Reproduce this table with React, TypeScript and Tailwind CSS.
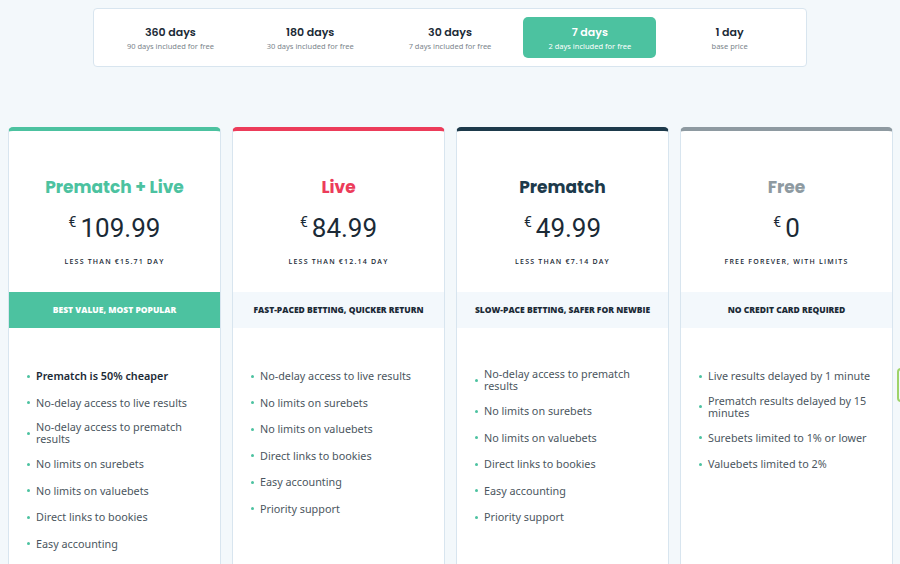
const tabs = [
  { days: "360 days", note: "90 days included for free" },
  { days: "180 days", note: "30 days included for free" },
  { days: "30 days", note: "7 days included for free" },
  { days: "7 days", note: "2 days included for free", active: true },
  { days: "1 day", note: "base price" },
];

type Plan = {
  name: string;
  color: string;
  bar: string;
  price: string;
  sub: string;
  band: string;
  featured?: boolean;
  items: string[];
  boldFirst?: boolean;
};

const plans: Plan[] = [
  {
    name: "Prematch + Live",
    color: "text-[#4cc2a0]",
    bar: "border-t-[#4cc2a0]",
    price: "109.99",
    sub: "LESS THAN €15.71 DAY",
    band: "BEST VALUE, MOST POPULAR",
    featured: true,
    boldFirst: true,
    items: [
      "Prematch is 50% cheaper",
      "No-delay access to live results",
      "No-delay access to prematch results",
      "No limits on surebets",
      "No limits on valuebets",
      "Direct links to bookies",
      "Easy accounting",
      "Priority support",
    ],
  },
  {
    name: "Live",
    color: "text-[#ec3c5a]",
    bar: "border-t-[#ec3c5a]",
    price: "84.99",
    sub: "LESS THAN €12.14 DAY",
    band: "FAST-PACED BETTING, QUICKER RETURN",
    items: [
      "No-delay access to live results",
      "No limits on surebets",
      "No limits on valuebets",
      "Direct links to bookies",
      "Easy accounting",
      "Priority support",
    ],
  },
  {
    name: "Prematch",
    color: "text-[#1d3a4b]",
    bar: "border-t-[#1d3a4b]",
    price: "49.99",
    sub: "LESS THAN €7.14 DAY",
    band: "SLOW-PACE BETTING, SAFER FOR NEWBIE",
    items: [
      "No-delay access to prematch results",
      "No limits on surebets",
      "No limits on valuebets",
      "Direct links to bookies",
      "Easy accounting",
      "Priority support",
    ],
  },
  {
    name: "Free",
    color: "text-[#8e9aa1]",
    bar: "border-t-[#8e9aa1]",
    price: "0",
    sub: "FREE FOREVER, WITH LIMITS",
    band: "NO CREDIT CARD REQUIRED",
    items: [
      "Live results delayed by 1 minute",
      "Prematch results delayed by 15 minutes",
      "Surebets limited to 1% or lower",
      "Valuebets limited to 2%",
    ],
  },
];

function PlanCard({ plan }: { plan: Plan }) {
  return (
    <div
      className={`flex h-[460px] flex-col rounded-t-[5px] border border-t-4 border-[#d8e5ef] bg-white ${plan.bar}`}
    >
      <h3
        className={`mt-[44px] text-center font-['Poppins','Open_Sans',sans-serif] text-[17px] font-bold leading-[24px] ${plan.color}`}
      >
        {plan.name}
      </h3>
      <div className="mt-[14px] flex justify-center font-['Roboto',sans-serif] text-[#1b2a36]">
        <span className="mr-[4px] mt-[2px] text-[14px] leading-[14px]">€</span>
        <span className="text-[26px] leading-[30px]">{plan.price}</span>
      </div>
      <p className="mt-[13px] text-center font-['Open_Sans',sans-serif] text-[7px] font-semibold leading-[12px] tracking-[1.2px] text-[#1b2a36]">
        {plan.sub}
      </p>
      <div
        className={`mt-[24px] flex h-[36px] items-center justify-center font-['Open_Sans',sans-serif] text-[8.5px] font-extrabold ${
          plan.featured ? "bg-[#4cc2a0] text-white" : "bg-[#f3f8fc] text-[#1b2a36]"
        }`}
      >
        {plan.band}
      </div>
      <ul className="mt-[42px] flex flex-col gap-[14.5px] pl-[18px] pr-[14px] font-['Noto_Sans',sans-serif] text-[10.8px] leading-[12px] text-[#4b5660]">
        {plan.items.map((item, i) => (
          <li key={item} className="flex min-h-[12px] items-center gap-[6px]">
            <span className="h-[3px] w-[3px] shrink-0 rounded-full bg-[#4cc2a0]" />
            <span
              className={`-my-[1.75px] ${
                plan.boldFirst && i === 0 ? "font-semibold text-[#1b2a36]" : ""
              }`}
            >
              {item}
            </span>
          </li>
        ))}
      </ul>
    </div>
  );
}

export default function App() {
  return (
    <div className="relative h-[564px] w-[900px] overflow-hidden bg-[#f3f8fb]">
      <div className="flex justify-center pt-[8px]">
        <div className="flex h-[59px] w-[714px] items-center gap-[7px] rounded-[4px] border border-[#d8e5ef] bg-white px-[10px]">
          {tabs.map((t) => (
            <div
              key={t.days}
              className={`flex h-[41px] w-[133px] flex-col items-center justify-center rounded-[5px] ${
                t.active ? "bg-[#4cc2a0] text-white" : "text-[#1b2a36]"
              }`}
            >
              <span className="font-['Poppins','Open_Sans',sans-serif] text-[11px] font-semibold leading-[14px]">
                {t.days}
              </span>
              <span
                className={`mt-[2px] font-['Noto_Sans',sans-serif] text-[7.5px] leading-[10px] ${
                  t.active ? "text-white" : "text-[#7b858c]"
                }`}
              >
                {t.note}
              </span>
            </div>
          ))}
        </div>
      </div>

      <div className="mt-[60px] grid grid-cols-4 gap-[11px] pl-[8px] pr-[7px]">
        {plans.map((p) => (
          <PlanCard key={p.name} plan={p} />
        ))}
      </div>

      <div className="absolute left-[897px] top-[368px] h-[34px] w-[20px] rounded-[4px] border-2 border-[#9fd36a]" />
    </div>
  );
}
